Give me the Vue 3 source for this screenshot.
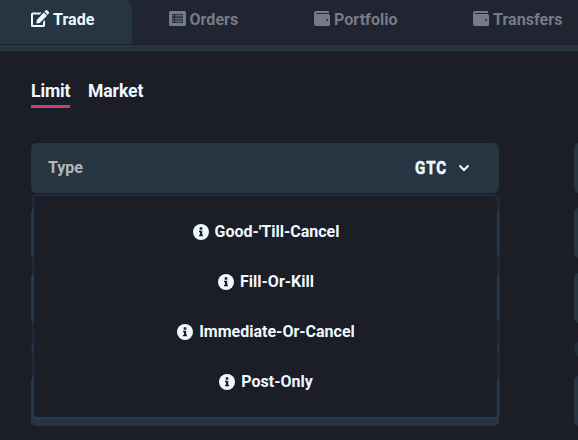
<script setup>
const tabs = [
  { label: 'Trade', icon: 'edit', active: true },
  { label: 'Orders', icon: 'list' },
  { label: 'Portfolio', icon: 'wallet' },
  { label: 'Transfers', icon: 'wallet' },
]
const options = ["Good-'Till-Cancel", 'Fill-Or-Kill', 'Immediate-Or-Cancel', 'Post-Only']
</script>

<template>
  <main class="panel">
    <nav class="tabs">
      <a v-for="tab in tabs" :key="tab.label" class="tab" :class="[tab.label.toLowerCase(), { active: tab.active }]">
        <svg v-if="tab.icon === 'edit'" class="icon edit" viewBox="0 0 18 17"><path d="M10.500 2.500H1.500A1.500 1.500 0 0 0 0 4v11.500A1.500 1.500 0 0 0 1.500 17h11a1.500 1.500 0 0 0 1.500-1.500V10l-2 2v3H2V4.500h7z"/><path d="M12.700 2.500 16 5.800 8.800 13l-3.500.500.500-3.500zM13.500 1.700l1-1.100a1.400 1.400 0 0 1 2 0L17.600 1.800a1.400 1.400 0 0 1 0 2L16.700 4.900z"/></svg>
        <svg v-else-if="tab.icon === 'list'" class="icon list" viewBox="0 0 17 15"><path fill-rule="evenodd" d="M1.500 0h14A1.500 1.500 0 0 1 17 1.500v12a1.500 1.500 0 0 1-1.500 1.500h-14A1.500 1.500 0 0 1 0 13.500v-12A1.500 1.500 0 0 1 1.500 0zM3 3v9h11V3z"/><path d="M3.300 3.800H5v1.700H3.300zm2.700 0h7.700v1.700H6zM3.300 6.700H5v1.700H3.300zm2.700 0h7.700v1.700H6zM3.300 9.600H5v1.700H3.300zm2.700 0h7.700v1.700H6z" opacity=".8"/></svg>
        <svg v-else class="icon wallet" viewBox="0 0 16 15"><path fill-rule="evenodd" d="M2 0h12q1 0 1 1v1H2.500a.5.5 0 0 0 0 1H14.500Q16 3 16 4.500v9Q16 15 14.500 15H2Q0 15 0 13V2Q0 0 2 0zM13 8a1 1 0 1 0 0 2 1 1 0 0 0 0-2z"/></svg>
        <span>{{ tab.label }}</span>
      </a>
    </nav>
    <div class="rule"></div>
    <div class="modes">
      <span class="mode selected">Limit</span>
      <span class="mode">Market</span>
    </div>
    <div class="columns">
      <section class="form">
        <div class="field">
          <span class="name">Type</span>
          <span class="value">GTC</span>
          <svg class="chevron" viewBox="0 0 12 8"><path d="M1.500 1.500 6 6l4.500-4.500"/></svg>
        </div>
        <div class="field"></div>
        <div class="field"></div>
        <div class="slider"></div>
        <div class="field"></div>
        <div class="menu">
          <div v-for="option in options" :key="option" class="option">
            <svg class="info" viewBox="0 0 16 16"><circle cx="8" cy="8" r="8"/><path d="M6.700 3.200h2.600v2.500H6.700zM6 6.700h3.200v4H10v1.600H6v-1.600h1V8.300H6z"/></svg>
            <span>{{ option }}</span>
          </div>
        </div>
      </section>
      <section class="form">
        <div class="field"></div>
        <div class="field"></div>
        <div class="field"></div>
        <div class="slider"></div>
        <div class="field"></div>
      </section>
    </div>
  </main>
</template>

<style>
body { background: #1b1d27; overflow: hidden; }
</style>

<style scoped>
.panel { width: 578px; height: 440px; overflow: hidden; background: #1b1d27; color: #f0f8ff; font: 700 16px/20px Roboto, sans-serif; }
.tabs { display: flex; height: 44px; background: #202531; color: #767b87; }
.tab { display: flex; flex: none; align-items: flex-start; padding-top: 10px; box-sizing: border-box; height: 44px; letter-spacing: .05px; }
.tab.trade { width: 132px; padding-left: 31px; }
.tab.orders { width: 168px; padding-left: 37px; }
.tab.portfolio { width: 159px; padding-left: 14px; }
.tab.transfers { width: 140px; padding-left: 14px; }
.tab.active { background: #263541; color: #f0f8ff; border-top-right-radius: 8px; }
.icon { display: block; flex: none; fill: currentColor; height: 15px; margin-top: 1px; }
.edit { width: 18px; height: 17px; margin: 0 4px 0 0; }
.list { width: 17px; margin-right: 3.5px; }
.wallet { width: 16px; margin-right: 4px; }
.rule { height: 6px; background: #263541; border-top: 1px solid #1b1d27; }
.modes { display: flex; gap: 17.6px; margin: 30px 0 0 31px; font-size: 17.6px; letter-spacing: -.12px; line-height: 21px; }
.mode { height: 24px; border-bottom: 3px solid transparent; }
.mode.selected { border-color: #c43d80; }
.columns { display: flex; gap: 75px; margin: 35px 0 0 31px; }
.form { position: relative; flex: none; width: 468px; }
.field { display: flex; align-items: center; box-sizing: border-box; height: 50px; margin-bottom: 15px; padding: 0 29px 0 17px; border-radius: 5px; background: #263541; }
.name { margin-right: auto; color: #b4b6b8; }
.value { margin-right: 11px; font-size: 18px; letter-spacing: 1px; transform: scaleX(.84); transform-origin: right; -webkit-text-stroke: .5px currentColor; }
.chevron { width: 12px; height: 8px; fill: none; stroke: #fff6e8; stroke-width: 2; }
.slider { height: 18px; margin: 17px 0 18px; border-radius: 9px; background: #212d39; }
.menu { position: absolute; top: 51px; left: 1px; box-sizing: border-box; width: 468px; height: 225px; padding: 11px 0 0 1px; border: 2px solid rgba(36, 66, 110, .35); border-right-width: 3px; border-radius: 6px; background: #1b1d27; background-clip: padding-box; }
.option { display: flex; align-items: center; justify-content: center; height: 50px; }
.info { width: 16px; height: 16px; margin-right: 6px; }
.info circle { fill: #f0f8ff; }
.info path { fill: #1b1d27; }
</style>
